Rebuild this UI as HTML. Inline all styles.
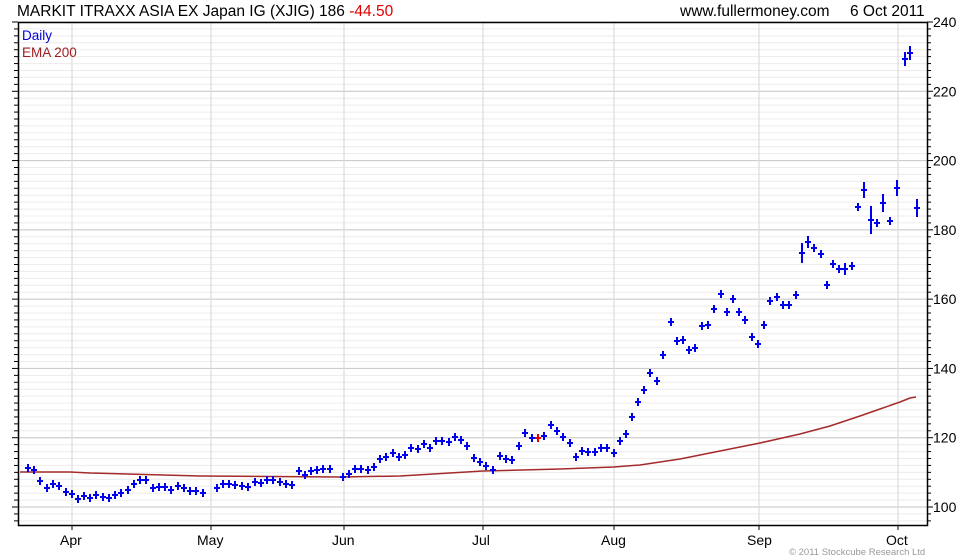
<!DOCTYPE html>
<html><head><meta charset="utf-8"><style>
html,body{margin:0;padding:0;background:#fff;width:980px;height:560px;overflow:hidden}
svg{display:block;font-family:"Liberation Sans",Arial,sans-serif}
</style></head><body>
<svg id="s" width="980" height="560" xmlns="http://www.w3.org/2000/svg">
<rect width="980" height="560" fill="#fff"/>
<g id="grid"></g>
<text x="17" y="16" font-size="15.5" fill="#000">MARKIT ITRAXX ASIA EX Japan IG (XJIG) 186 <tspan fill="#e00000">-44.50</tspan></text>
<text x="680" y="16" font-size="15.5" fill="#000">www.fullermoney.com</text>
<text x="850" y="16" font-size="15.5" fill="#000">6 Oct 2011</text>
<text x="22" y="40" font-size="13.5" fill="#0000dd">Daily</text>
<text x="22" y="57" font-size="13.5" fill="#a02020">EMA 200</text>
<polyline fill="none" stroke="#a52a2a" stroke-width="1.5" points="20,472 70,472 90,473 200,476 340,477 400,476 483,471 560,469 614,467 640,465 680,459 720,451 760,443 800,434 830,426 860,416 880,409 900,402 910,398 916,397"/>
<g id="bars" stroke="#0000ee" stroke-width="2"></g>
<rect x="18.5" y="22.5" width="909" height="503" fill="none" stroke="#000" stroke-width="1.5"/>
<text x="60" y="545" font-size="14">Apr</text>
<text x="197" y="545" font-size="14">May</text>
<text x="332" y="545" font-size="14">Jun</text>
<text x="472" y="545" font-size="14">Jul</text>
<text x="601" y="545" font-size="14">Aug</text>
<text x="747" y="545" font-size="14">Sep</text>
<text x="886" y="545" font-size="14">Oct</text>
<text x="789" y="555" font-size="9.5" fill="#999">© 2011 Stockcube Research Ltd</text>
</svg>
<script>
var NS="http://www.w3.org/2000/svg",g=document.getElementById('grid'),b=document.getElementById('bars');
function Y(v){return 507-(v-100)*3.4643;}
function el(p,t,a){var e=document.createElementNS(NS,t);for(var k in a)e.setAttribute(k,a[k]);p.appendChild(e);return e;}
for(var v=96;v<=240;v+=2){var y=Y(v);if(y<21||y>525)continue;var maj=(v%20==0);
el(g,'line',{x1:18,x2:927,y1:y,y2:y,stroke:maj?'#c4c4c4':'#ececec','stroke-width':1});
el(g,'line',{x1:927,x2:maj?933:931,y1:y,y2:y,stroke:'#000','stroke-width':1});
el(g,'line',{x1:maj?12:14,x2:18,y1:y,y2:y,stroke:'#000','stroke-width':1});
if(maj){var t=el(document.getElementById('s'),'text',{x:933,y:y+5,'font-size':14});t.textContent=v;}}
[72,211,344,483,614,759,898].forEach(function(x){el(g,'line',{x1:x,x2:x,y1:22,y2:525,stroke:'#dcdcdc','stroke-width':1.2});el(g,'line',{x1:x,x2:x,y1:525,y2:530,stroke:'#000'});});
var d=[[28,468],[34,470],[40,481],[47,488],[53,484],[59,486],[66,492],[72,494],[78,499],[84,496],[90,498],[96,495],[103,497],[109,498],[115,495],[121,493],[128,490],[134,484],[140,480],[146,480],[153,488],[159,487],[165,487],[171,490],[178,486],[184,488],[190,491],[196,491],[203,493],[217,488],[223,484],[229,484],[235,485],[242,486],[248,487],[255,482],[261,483],[267,480],[273,480],[280,482],[286,484],[292,485],[299,471],[305,475],[311,471],[317,470],[323,469],[330,469],[343,477],[349,474],[355,469],[361,469],[368,470],[374,467],[380,459],[386,457],[393,453],[399,457],[405,455],[411,448],[418,449],[424,444],[430,448],[436,441],[442,441],[449,442],[455,437],[461,440],[467,446],[474,458],[480,462],[486,466],[493,470],[500,456],[506,459],[512,460],[519,446],[525,433],[532,438],[538,438,1],[544,436],[551,425],[557,431],[563,437],[570,443],[576,457],[582,451],[588,452],[595,452],[601,448],[607,448],[614,453],[620,441],[626,434],[632,417],[638,402],[644,390],[650,373],[657,381],[663,355],[671,322],[677,341],[683,340],[689,350],[695,348],[702,326],[708,325],[714,309],[721,294],[727,312],[733,299],[739,312],[745,320],[752,337],[758,344],[764,325],[770,301],[777,297],[783,305],[789,305],[796,295],[802,253,10],[808,242,6],[814,248],[821,254],[827,285],[833,264],[839,269],[845,269,6],[852,266],[858,207],[864,190,8],[871,220,14],[877,223],[883,203,9],[890,221],[897,188,8],[905,59,7],[910,53,7],[917,208,9]];
d.forEach(function(p){var h=p[2]&&p[2]>1?p[2]:4,c=p[2]===1?'#e00000':'#0000ee';
el(b,'line',{x1:p[0],x2:p[0],y1:p[1]-h,y2:p[1]+h,stroke:c});
el(b,'line',{x1:p[0]-3,x2:p[0]+3,y1:p[1],y2:p[1],stroke:c});});
</script>
</body></html>
